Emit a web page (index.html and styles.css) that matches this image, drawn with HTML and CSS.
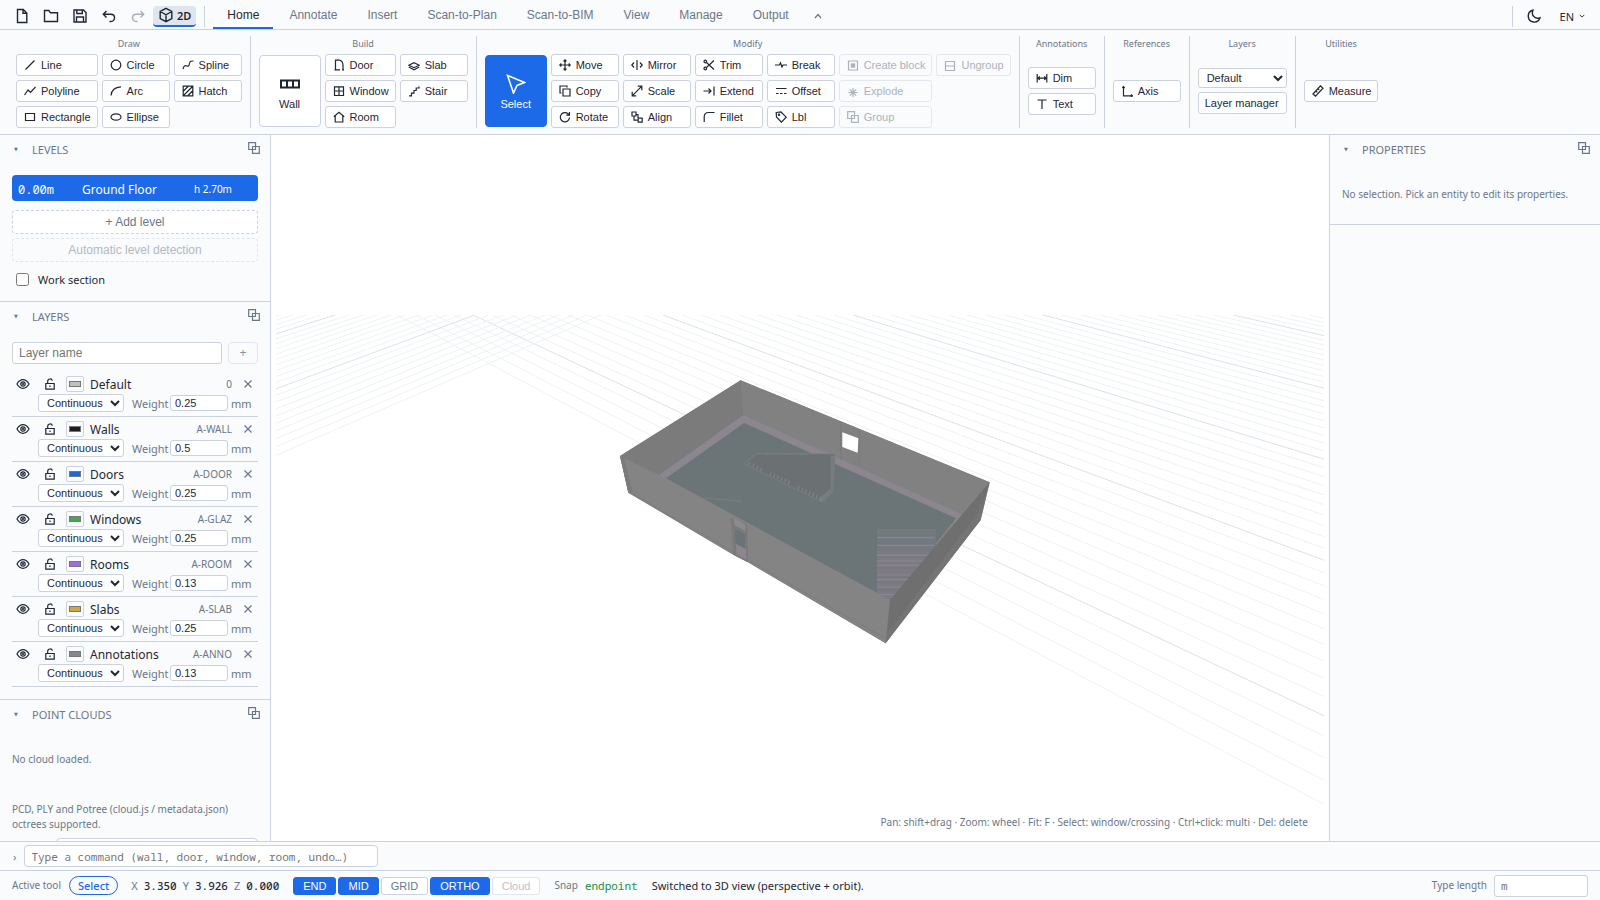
FILE: index.html
```html
<!DOCTYPE html>
<html lang="en">
<head>
<meta charset="utf-8">
<title>Plan editor</title>
<link rel="stylesheet" href="styles.css">
</head>
<body>
<svg class="defs" aria-hidden="true">
  <symbol id="i-line" viewBox="0 0 12 12"><path d="M1.5 10.5 10.5 1.500"/></symbol>
  <symbol id="i-poly" viewBox="0 0 12 12"><path d="M.5 10 4 5l2.500 2.500L11.500 2"/></symbol>
  <symbol id="i-rect" viewBox="0 0 12 12"><path d="M1.500 2.500h9v7h-9z"/></symbol>
  <symbol id="i-circle" viewBox="0 0 12 12"><circle cx="6" cy="6" r="4.800"/></symbol>
  <symbol id="i-arc" viewBox="0 0 12 12"><path d="M1 10.500C1.500 5 5.500 2 11 1.800"/></symbol>
  <symbol id="i-ellipse" viewBox="0 0 12 12"><ellipse cx="6" cy="6" rx="5" ry="3.200"/></symbol>
  <symbol id="i-spline" viewBox="0 0 12 12"><path d="M1 10c1-4 2.500-3.500 4-3s2 0 2.500-2.500S9 2 11.500 2"/></symbol>
  <symbol id="i-hatch" viewBox="0 0 12 12"><path d="M1.200 1.200h9.600v9.600H1.200zM1.500 6l4.500-4.500M1.500 10.500l9-9M6 10.500 10.500 6"/></symbol>
  <symbol id="i-wall" viewBox="0 0 20 10"><path d="M1 1.500h18v7H1zM7 1.500v7M13 1.500v7"/></symbol>
  <symbol id="i-door" viewBox="0 0 12 12"><path d="M2.500 10.800V1.200h4.500c2 .8 3 2.500 3 5v4.600M1.500 10.800h5.500M9 10.800h2"/></symbol>
  <symbol id="i-window" viewBox="0 0 12 12"><path d="M1.500 1.800h9v8.700h-9zM6 1.800v8.700M1.500 6h9"/></symbol>
  <symbol id="i-room" viewBox="0 0 12 12"><path d="M.8 5.800 6 1.200l5.200 4.600M2.200 5v6h7.600V5"/></symbol>
  <symbol id="i-slab" viewBox="0 0 12 12"><path d="M.8 6.200 6 3.700l5.200 2.500L6 8.700zM.8 8 6 10.700 11.200 8"/></symbol>
  <symbol id="i-stair" viewBox="0 0 12 12"><path d="M1 10.800h2.500V8.200H6V5.500h2.200V3h2.800V1.500"/></symbol>
  <symbol id="i-select" viewBox="0 0 20 20"><path d="m1.500 1.500 17 7-7.500 3-3.500 7.500z"/></symbol>
  <symbol id="i-move" viewBox="0 0 12 12"><path d="M6 .8v10.400M.8 6h10.400M4.500 2.300 6 .8l1.500 1.500M4.500 9.700 6 11.200l1.500-1.500M2.300 4.500.8 6l1.500 1.500M9.700 4.500 11.200 6 9.700 7.500"/></symbol>
  <symbol id="i-copy" viewBox="0 0 12 12"><path d="M4 4h7v7H4zM2.500 8H1V1h7v1.500"/></symbol>
  <symbol id="i-rotate" viewBox="0 0 12 12"><path d="M10.500 6.500A4.600 4.600 0 1 1 9 2.800l1.300 1.200M10.500 1v3.200H7.300"/></symbol>
  <symbol id="i-mirror" viewBox="0 0 12 12"><path d="M6 1v10M3 3.500.8 6 3 8.500M9 3.500 11.200 6 9 8.500"/></symbol>
  <symbol id="i-scale" viewBox="0 0 12 12"><path d="m1.200 10.800 9.600-9.600M6.800 1.200h4v4M1.200 6.800v4h4"/></symbol>
  <symbol id="i-align" viewBox="0 0 12 12"><path d="M1 1h4v4H1zM7.200 7.200h4v4h-4zM3 5v4.200h4.200M5 3.500h2v3.700"/></symbol>
  <symbol id="i-trim" viewBox="0 0 12 12"><path d="m3.500 3.500 7.500 7M3.500 8.500l7.500-7"/><circle cx="2.300" cy="2.500" r="1.300"/><circle cx="2.300" cy="9.500" r="1.300"/></symbol>
  <symbol id="i-extend" viewBox="0 0 12 12"><path d="M.5 6h7.500M5.500 3.500 8 6 5.500 8.500M11 1.500v9"/></symbol>
  <symbol id="i-fillet" viewBox="0 0 12 12"><path d="M1.200 11V6c0-3 1.500-4.500 4.500-4.500H11.500"/></symbol>
  <symbol id="i-break" viewBox="0 0 12 12"><path d="M0 6h4.500L5.500 3.800 7 8l1-2h4"/></symbol>
  <symbol id="i-offset" viewBox="0 0 12 12"><path d="M1 3.500h10.500M1 8.500h2.500M5 8.500h2.500M9 8.500h2.500"/></symbol>
  <symbol id="i-label" viewBox="0 0 12 12"><path d="M1.200 1.500 6 1l5.200 5.200-4.800 5L1.500 6z"/><circle cx="4" cy="3.800" r=".6"/></symbol>
  <symbol id="i-block" viewBox="0 0 12 12"><path d="M1.500 2h9v9h-9z"/><path class="solid" d="M3.800 4.300h4.400v4.400H3.800z"/></symbol>
  <symbol id="i-explode" viewBox="0 0 12 12"><path d="M6 3v9M1.500 7.500h9M2.800 4.300l6.400 6.400M9.200 4.300l-6.400 6.400"/></symbol>
  <symbol id="i-group" viewBox="0 0 12 12"><path d="M.7 .7h6.800v6.800H.7zM4.500 4.500h6.800v6.800H4.500z"/></symbol>
  <symbol id="i-ungroup" viewBox="0 0 12 12"><path d="M1.500 2v10M10.500 2v10M1.500 2.500h9M1.500 7h9M1.500 11.500h9"/></symbol>
  <symbol id="i-dim" viewBox="0 0 12 12"><path d="M1.200 2v8.500M10.800 2v8.500M1.200 6.200h9.600M3.800 4.500 1.800 6.200l2 1.700M8.200 4.500l2 1.700-2 1.700"/></symbol>
  <symbol id="i-text" viewBox="0 0 12 12"><path d="M1.500 2h9M6 2v9"/></symbol>
  <symbol id="i-axis" viewBox="0 0 12 12"><path d="M2.500 1.500v9.300h9M1.300 3l1.200-1.500L3.700 3M10 9.500l1.500 1.300L10 12"/></symbol>
  <symbol id="i-measure" viewBox="0 0 12 12"><path d="M1 9 8.500.8 11 3.200 3.500 11.200zM4 6l1.300 1.300M6 3.800l1.300 1.300"/></symbol>
  <symbol id="i-eye" viewBox="0 0 14 12"><path d="M1 6c3.200-5.800 8.800-5.800 12 0-3.200 5.800-8.800 5.800-12 0z"/><circle cx="7" cy="6" r="2.200"/><circle cx="7" cy="6" r=".5"/></symbol>
  <symbol id="i-lock" viewBox="0 0 12 12"><path d="M1.800 5.500h8.400v5.700H1.800zM3.700 5.500V3.200C3.700.3 8 .3 8.300 2.800M6 7.500v1.500"/></symbol>
  <symbol id="i-x" viewBox="0 0 12 12"><path d="m2.500 2.500 7 7M9.500 2.500l-7 7"/></symbol>
</svg>

<header class="topbar">
  <button class="tool" aria-label="New"><svg viewBox="0 0 16 16"><path d="M3.500 1.500h5.800l3.500 3.500v9.500H3.500zM9 1.500V5.300h3.800"/></svg></button>
  <button class="tool" aria-label="Open"><svg viewBox="0 0 16 16"><path d="M1.500 13.500v-11h4.300l1.700 2.200h7v8.800z"/></svg></button>
  <button class="tool" aria-label="Save"><svg viewBox="0 0 16 16"><path d="M2 2h9.500L14 4.500V14H2zM4.500 14V9h7v5M4.800 2v3.500h5.500V2"/></svg></button>
  <button class="tool" aria-label="Undo"><svg viewBox="0 0 16 16"><path d="M5.500 3 2.300 6.200l3.200 3.200M2.300 6.200h7.500c5 0 5 7.300 0 7.300H8.500"/></svg></button>
  <button class="tool" aria-label="Redo" disabled><svg viewBox="0 0 16 16"><path d="m10.500 3 3.200 3.200-3.200 3.200M13.700 6.200H6.200c-5 0-5 7.300 0 7.300h1.300"/></svg></button>
  <button class="view-toggle"><svg viewBox="0 0 16 16"><path d="m8 1.300 5.800 3.200v7L8 14.700l-5.800-3.200v-7zM2.200 4.500 8 7.800l5.800-3.300M8 7.800v6.900"/></svg>2D</button>
  <span class="rule"></span>
  <nav class="tabs">
    <button class="tab active">Home</button><button class="tab">Annotate</button><button class="tab">Insert</button><button class="tab">Scan-to-Plan</button><button class="tab">Scan-to-BIM</button><button class="tab">View</button><button class="tab">Manage</button><button class="tab">Output</button>
    <button class="tab fold" aria-label="Collapse ribbon"><svg class="chev" viewBox="0 0 8 8"><path d="m1 6 3-3.500L7 6"/></svg></button>
  </nav>
  <div class="top-right">
    <span class="rule"></span>
    <button class="tool" aria-label="Dark theme"><svg viewBox="0 0 16 16"><path d="M7 2.200A6 6 0 1 0 14 9.800 5.500 5.500 0 0 1 7 2.200z"/></svg></button>
    <button class="lang">EN <svg class="chev small" viewBox="0 0 8 8"><path d="m1 2.500 3 3 3-3"/></svg></button>
  </div>
</header>

<section class="ribbon">
  <div class="group"><div class="group-name">Draw</div><div class="cols">
    <div class="col"><button class="btn"><svg><use href="#i-line"/></svg>Line</button><button class="btn"><svg><use href="#i-poly"/></svg>Polyline</button><button class="btn"><svg><use href="#i-rect"/></svg>Rectangle</button></div>
    <div class="col"><button class="btn"><svg><use href="#i-circle"/></svg>Circle</button><button class="btn"><svg><use href="#i-arc"/></svg>Arc</button><button class="btn"><svg><use href="#i-ellipse"/></svg>Ellipse</button></div>
    <div class="col"><button class="btn"><svg><use href="#i-spline"/></svg>Spline</button><button class="btn"><svg><use href="#i-hatch"/></svg>Hatch</button></div>
  </div></div>
  <div class="group"><div class="group-name">Build</div><div class="cols">
    <button class="big"><svg class="wall"><use href="#i-wall"/></svg>Wall</button>
    <div class="col"><button class="btn"><svg><use href="#i-door"/></svg>Door</button><button class="btn"><svg><use href="#i-window"/></svg>Window</button><button class="btn"><svg><use href="#i-room"/></svg>Room</button></div>
    <div class="col"><button class="btn"><svg><use href="#i-slab"/></svg>Slab</button><button class="btn"><svg><use href="#i-stair"/></svg>Stair</button></div>
  </div></div>
  <div class="group"><div class="group-name">Modify</div><div class="cols">
    <button class="big on"><svg><use href="#i-select"/></svg>Select</button>
    <div class="col"><button class="btn"><svg><use href="#i-move"/></svg>Move</button><button class="btn"><svg><use href="#i-copy"/></svg>Copy</button><button class="btn"><svg><use href="#i-rotate"/></svg>Rotate</button></div>
    <div class="col"><button class="btn"><svg><use href="#i-mirror"/></svg>Mirror</button><button class="btn"><svg><use href="#i-scale"/></svg>Scale</button><button class="btn"><svg><use href="#i-align"/></svg>Align</button></div>
    <div class="col"><button class="btn"><svg><use href="#i-trim"/></svg>Trim</button><button class="btn"><svg><use href="#i-extend"/></svg>Extend</button><button class="btn"><svg><use href="#i-fillet"/></svg>Fillet</button></div>
    <div class="col"><button class="btn"><svg><use href="#i-break"/></svg>Break</button><button class="btn"><svg><use href="#i-offset"/></svg>Offset</button><button class="btn"><svg><use href="#i-label"/></svg>Lbl</button></div>
    <div class="col"><button class="btn" disabled><svg><use href="#i-block"/></svg>Create block</button><button class="btn" disabled><svg><use href="#i-explode"/></svg>Explode</button><button class="btn" disabled><svg><use href="#i-group"/></svg>Group</button></div>
    <div class="col"><button class="btn" disabled><svg><use href="#i-ungroup"/></svg>Ungroup</button></div>
  </div></div>
  <div class="group"><div class="group-name">Annotations</div><div class="cols middle"><div class="col"><button class="btn"><svg><use href="#i-dim"/></svg>Dim</button><button class="btn"><svg><use href="#i-text"/></svg>Text</button></div></div></div>
  <div class="group"><div class="group-name">References</div><div class="cols middle"><div class="col"><button class="btn"><svg><use href="#i-axis"/></svg>Axis</button></div></div></div>
  <div class="group"><div class="group-name">Layers</div><div class="cols middle"><div class="col"><select class="layer-select" aria-label="Current layer"><option>Default</option></select><button class="btn plain">Layer manager</button></div></div></div>
  <div class="group"><div class="group-name">Utilities</div><div class="cols middle"><div class="col"><button class="btn"><svg><use href="#i-measure"/></svg>Measure</button></div></div></div>
</section>

<main class="work">
  <aside class="side left">
    <section class="panel">
      <h2><span class="tri">▼</span>Levels<button class="pop" aria-label="Detach levels"><svg><use href="#i-group"/></svg></button></h2>
      <div class="level"><code>0.00m</code><span>Ground Floor</span><small>h 2.70m</small></div>
      <button class="dashed">+ Add level</button>
      <button class="dashed" disabled>Automatic level detection</button>
      <label class="check"><input type="checkbox">Work section</label>
    </section>
    <section class="panel">
      <h2><span class="tri">▼</span>Layers<button class="pop" aria-label="Detach layers"><svg><use href="#i-group"/></svg></button></h2>
      <div class="add-layer"><input type="text" placeholder="Layer name" aria-label="Layer name"><button disabled>+</button></div>
      <ul class="layers" id="layers"></ul>
    </section>
    <section class="panel clouds">
      <h2><span class="tri">▼</span>Point clouds<button class="pop" aria-label="Detach point clouds"><svg><use href="#i-group"/></svg></button></h2>
      <p>No cloud loaded.</p>
      <p class="formats">PCD, PLY and Potree (cloud.js / metadata.json) octrees supported.</p>
      <input class="url" type="text" aria-label="Cloud address">
    </section>
  </aside>

  <div class="viewport">
    <svg class="scene" viewBox="271 135 1058 706" preserveAspectRatio="xMidYMid slice" role="img" aria-label="3D view of the building">
      <clipPath id="ground"><rect x="276" y="315" width="1048" height="526"/></clipPath>
      <g id="grid" clip-path="url(#ground)"></g>
      <g transform="translate(600 360) scale(.33333)">
        <path fill="#848485" d="M60 288 422 61l747 306-27 113-285 370-414-244-43-22L85 398z"/>
        <path fill="#7b7b7c" d="m60 288 362-227 8 104-252 180z"/>
        <path fill="#818182" d="m422 61 747 306-90 106-649-308z"/>
        <path fill="#8c868f" d="m178 345 252-180 655 298-20 25-640-290-227 163z"/>
        <path fill="#6b7577" d="m198 355 234-166 636 286-198 245z"/>
        <path fill="#7d7a83" d="M831 507h177v52L870 720l-39-21z"/>
        <path fill="#747a80" d="M831 507h177v52l-10 12H831z"/>
        <g stroke="#8d8896" stroke-width="3"><path d="M831 533h172M831 556h172M831 586h152M831 603h138M831 616h127M831 645h103M831 658h92M831 681h72M840 704h43"/></g>
        <g stroke="#717782" stroke-width="2"><path d="M831 514h177M831 526h177M831 541h177M831 549h177M831 572h165M831 591h148M831 625h120M831 652h97M831 668h84M831 690h65"/></g>
        <path fill="#848485" d="m60 288 118 60 692 372-13 130-414-244-43-22L85 398z"/>
        <path fill="#747475" d="M1169 367 870 720l-13 130 285-370z"/>
        <path fill="#6f6f70" d="M870 720 862 822 1142 445 1169 367z"/>
        <path fill="#7b7b7c" d="m60 288 12 4 24 100-11 6z"/>
        <path fill="none" stroke="#79797a" stroke-width="2" d="m85 394 315 182M443 600l415 236 4-20M1150 380l-12 75 4 22M862 822l280-360"/>
        <path fill="#6b7073" d="m433 312 37-31h235l-5 112-32 34z"/>
        <path fill="#777d7f" d="m692 288 15-3-7 110-32 32-13-10 37-32z"/>
        <path fill="none" stroke="#7d8588" stroke-width="2" d="m433 312 37-31h235M433 312l235 115M310 414l115 10"/>
        <path fill="none" stroke="#7e8587" stroke-width="4" stroke-dasharray="3 6" d="M500 283h125M635 281h68"/>
        <path fill="none" stroke="#828a8b" stroke-width="3" d="m446 316 3-10m9 16 3-10m9 16 3-10m9 16 3-10M510 348l3-11m8 16 3-11m8 16 3-11m8 16 3-11m8 16 3-11m8 16 3-11M594 390l3-12m8 16 3-12m8 18 3-12m8 18 3-12m8 16 3-12m8 18 3-12m8 18 3-12"/>
        <path fill="#7b7b7c" d="m392 472 50 22v112l-42-22z"/>
        <path fill="#8b8b8c" d="m400 494 38 20v-20l-38-20z"/>
        <path fill="#6a7377" d="m405 508 31 14-2 44-27-14z"/>
        <path fill="#8d8691" d="m408 552 29 15 3 32-30-16z"/>
        <path stroke="#757576" stroke-width="2" fill="none" d="M401 474v26l7 84M437 494l6 110M722 188v112M778 210v108"/>
        <path fill="#fff" d="m727 217 48 18-2 43-46-17z"/>
      </g>
    </svg>
    <p class="hint">Pan: shift+drag · Zoom: wheel · Fit: F · Select: window/crossing · Ctrl+click: multi · Del: delete</p>
  </div>

  <aside class="side right">
    <section class="panel">
      <h2><span class="tri">▼</span>Properties<button class="pop" aria-label="Detach properties"><svg><use href="#i-group"/></svg></button></h2>
      <p>No selection. Pick an entity to edit its properties.</p>
    </section>
  </aside>
</main>

<form class="command"><label for="cmd">›</label><input id="cmd" type="text" placeholder="Type a command (wall, door, window, room, undo…)"></form>

<footer class="status">
  <span class="muted">Active tool</span><span class="pill">Select</span>
  <span class="coords"><span>X</span><b>3.350</b><span>Y</span><b>3.926</b><span>Z</span><b>0.000</b></span>
  <span class="snaps"><button class="snap on">END</button><button class="snap on">MID</button><button class="snap">GRID</button><button class="snap on">ORTHO</button><button class="snap" disabled>Cloud</button></span>
  <span class="snapinfo">Snap<code>endpoint</code></span>
  <span class="message">Switched to 3D view (perspective + orbit).</span>
  <label class="length" for="len">Type length</label><input id="len" type="text" placeholder="m">
</footer>
<script src="app.js"></script>
</body>
</html>
```

FILE: styles.css
```css
:root {
  --bg: #f9fbfd;
  --line: #cbd2dd;
  --text: #1f2733;
  --muted: #6b7788;
  --blue: #1d6ae8;
  --ui: "Noto Sans", sans-serif;
  --control: "Liberation Sans", Arial, sans-serif;
  --mono: "Noto Sans Mono", "Liberation Mono", monospace;
}
* { box-sizing: border-box; }
body {
  margin: 0;
  height: 100vh;
  display: flex;
  flex-direction: column;
  overflow: hidden;
  background: var(--bg);
  color: var(--text);
  font: 11px/15px var(--ui);
}
button, input, select { font: 11px var(--control); color: inherit; margin: 0; }
input::placeholder { color: #757575; }
button { padding: 0; border: 0; background: none; }
svg { fill: none; stroke: currentColor; stroke-width: 1.2; flex: none; }
.solid { fill: currentColor; stroke: none; }
.defs { position: absolute; width: 0; height: 0; }
p, h2, ul { margin: 0; padding: 0; }
.muted { font-size: 10px; color: var(--muted); }

.topbar {
  display: flex;
  align-items: center;
  height: 30px;
  flex: none;
  padding: 0 10px 0 7px;
  border-bottom: 1px solid var(--line);
}
.tool { width: 29px; height: 26px; margin-top: 3px; display: grid; place-items: center; }
.tool svg, .view-toggle svg { width: 16px; height: 16px; stroke-width: 1.4; }
.tool:disabled { color: #a9afb9; }
.view-toggle {
  display: flex;
  align-items: center;
  gap: 3px;
  height: 21px;
  margin: 3px 8px 0 1px;
  padding: 0 5px;
  border-radius: 4px;
  border-bottom: 2px solid var(--blue);
  background: #dfe5ef;
  font: 600 11px var(--ui);
}
.rule { width: 1px; height: 21px; margin-top: 3px; background: var(--line); }
.tabs { display: flex; align-self: stretch; gap: 2px; margin-left: 8px; }
.tab { padding: 2px 14px 0; border-bottom: 2px solid transparent; font-size: 12px; color: var(--muted); }
.tab.active { border-color: var(--blue); color: var(--text); }
.tab.fold { padding: 4px 9px 0; }
.chev { width: 8px; height: 8px; }
.chev.small { width: 6px; height: 6px; }
.top-right { display: flex; align-items: center; margin-left: auto; }
.top-right .tool { margin: 3px 5px 0 7px; }
.lang { display: flex; align-items: center; gap: 5px; padding: 3px 5px 0 6px; font-family: var(--ui); }

.ribbon { display: flex; flex: none; padding: 6px 8px; border-bottom: 1px solid var(--line); }
.group { display: flex; flex-direction: column; gap: 4px; padding: 0 8px; border-right: 1px solid var(--line); }
.group:last-child { border: 0; }
.group-name { height: 14px; font-size: 9px; text-align: center; color: var(--muted); }
.cols { display: flex; gap: 4px; height: 74px; }
.cols.middle { align-items: center; }
.col { display: flex; flex-direction: column; gap: 4px; }
.btn {
  display: flex;
  align-items: center;
  gap: 5px;
  height: 22px;
  min-width: 68px;
  padding: 0 6px 0 7px;
  border: 1px solid var(--line);
  border-radius: 3px;
  background: #fff;
}
.btn svg { width: 12px; height: 12px; }
.btn:disabled { color: #adb3bc; border-color: #e4e8ee; background: var(--bg); }
.btn.plain { padding: 0 7px 0 6px; }
.big {
  display: flex;
  flex-direction: column;
  align-items: center;
  justify-content: center;
  gap: 4px;
  width: 62px;
  height: 72px;
  margin-top: 1px;
  padding-top: 2px;
  border: 1px solid var(--line);
  border-radius: 4px;
  background: #fff;
}
.big svg { width: 20px; height: 20px; stroke-width: 1.6; }
.big .wall { stroke-width: 2; }
.big.on { border-color: var(--blue); background: var(--blue); color: #fff; }
.layer-select { height: 20px; padding: 0 4px; border: 1px solid var(--line); border-radius: 3px; background: #fff; }

.work { display: flex; flex: 1; min-height: 0; }
.side { width: 271px; flex: none; overflow: hidden; }
.left { border-right: 1px solid var(--line); }
.right { border-left: 1px solid var(--line); }
.panel { padding: 0 12px 12px; border-bottom: 1px solid var(--line); }
.panel h2 {
  display: flex;
  align-items: center;
  height: 40px;
  padding-bottom: 12px;
  font-size: 11px;
  font-weight: 400;
  color: var(--muted);
  text-transform: uppercase;
}
.tri { width: 20px; font: 5px "DejaVu Sans", sans-serif; padding-left: 2px; }
.pop { margin: 0 -2px 2px auto; display: flex; }
.pop svg { width: 12px; height: 12px; }
.level {
  display: grid;
  grid-template-columns: 64px 1fr 58px;
  align-items: center;
  height: 26px;
  margin-bottom: 9px;
  padding: 2px 6px 0;
  border-radius: 4px;
  background: var(--blue);
  color: #fff;
  font-size: 12px;
}
.level code { font: 12px var(--mono); }
.level small { font-size: 10px; }
.dashed {
  display: block;
  width: 100%;
  height: 24px;
  margin-bottom: 4px;
  border: 1px dashed var(--line);
  border-radius: 4px;
  background: #fff;
  font-size: 12px;
  color: var(--muted);
}
.dashed:disabled { background: none; border-color: #e1e6ec; color: #b3b9c2; }
.check { display: flex; align-items: center; gap: 9px; height: 26px; margin-bottom: -3px; padding: 1px 4px 0; }
.check input { width: 13px; height: 13px; }
.add-layer { display: flex; gap: 6px; }
.add-layer input { flex: 1; min-width: 0; height: 22px; padding: 0 6px; border: 1px solid var(--line); border-radius: 3px; background: #fff; font-size: 12px; }
.add-layer button { width: 30px; border: 1px solid #e1e6ec; border-radius: 4px; color: #8c939e; font-size: 12px; }
.layers { margin-top: 8px; list-style: none; }
.layers li { padding: 4px 0; border-bottom: 1px solid var(--line); }
.layer-top { display: grid; grid-template-columns: 21px 21px 18px 1fr auto 20px; gap: 6px; align-items: center; height: 16px; margin-bottom: 2px; }
.layer-top button { display: grid; place-items: center; }
.layer-top svg { width: 12px; height: 12px; }
.layer-top .eye { width: 14px; }
.layer-top input { width: 18px; height: 16px; padding: 0; border: 1px solid var(--line); border-radius: 2px; background: var(--bg); }
.layer-top input::-webkit-color-swatch-wrapper { padding: 4px 2px; }
.layer-top input::-webkit-color-swatch { border: 1px solid #777; border-radius: 0; }
.layer-name { font-size: 12px; }
.code { font-size: 10px; color: var(--muted); }
.del { color: var(--muted); }
.layer-bottom { display: flex; align-items: center; height: 18px; margin-left: 26px; color: var(--muted); }
.layer-bottom select { width: 86px; height: 18px; margin-right: 8px; padding: 0 4px; border: 1px solid var(--line); border-radius: 3px; background: #fff; color: var(--text); }
.layer-bottom label { width: 38px; }
.layer-bottom input { width: 58px; height: 16px; margin-right: 3px; padding: 0 4px; border: 1px solid var(--line); border-radius: 3px; background: #fff; color: var(--text); }
.panel p { padding: 12px 0 10px; font-size: 10px; color: var(--muted); }
.clouds .formats { padding: 25px 0 6px; }
.url { display: block; width: 202px; height: 22px; margin-left: auto; border: 1px solid var(--line); border-radius: 4px; }

.viewport { position: relative; flex: 1; min-width: 0; background: #fff; }
.scene { position: absolute; inset: 0; width: 100%; height: 100%; stroke: none; }
.minor { stroke: #edf3f5; stroke-width: 1; }
.major { stroke: #dbe2e9; stroke-width: 1; }
.hint { position: absolute; right: 21px; bottom: 11px; font-size: 10px; color: var(--muted); }

.command { display: flex; align-items: center; gap: 8px; height: 29px; flex: none; padding: 0 12px 0 13px; border-top: 1px solid var(--line); color: var(--muted); }
.command input { width: 354px; height: 22px; padding: 0 6px; border: 1px solid var(--line); border-radius: 4px; background: #fff; font-family: var(--mono); }
.status { display: flex; align-items: center; height: 30px; flex: none; padding: 0 12px; border-top: 1px solid var(--line); }
.pill { margin: 0 13px 0 8px; padding: 1px 8px; border: 1px solid var(--blue); border-radius: 10px; color: var(--blue); font-weight: 500; }
.coords { display: flex; gap: 6px; color: var(--muted); }
.coords b, .snapinfo code { font-family: var(--mono); }
.coords b { font-weight: 500; color: var(--text); }
.snaps { display: flex; gap: 2px; margin: 0 14px; }
.snap { height: 18px; padding: 0 9px; border: 1px solid var(--line); border-radius: 3px; background: #fff; color: var(--muted); }
.snap.on { border-color: var(--blue); background: var(--blue); color: #fff; }
.snap:disabled { border-color: #e1e6ec; color: #bcc2ca; }
.snapinfo { display: flex; gap: 7px; margin-right: 14px; font-size: 10px; color: var(--muted); }
.snapinfo code { color: #16914a; font-size: 11px; }
.length { margin: 0 7px 0 auto; font-size: 10px; color: var(--muted); }
#len { width: 94px; height: 22px; padding: 0 6px; border: 1px solid var(--line); border-radius: 3px; background: #fff; font-family: var(--mono); }
```

FILE: app.js
```js
const layers = [
  ["Default", "0", "#c0c0c0", "0.25"],
  ["Walls", "A-WALL", "#1c1c1c", "0.5"],
  ["Doors", "A-DOOR", "#1d6ae0", "0.25"],
  ["Windows", "A-GLAZ", "#3fa850", "0.25"],
  ["Rooms", "A-ROOM", "#9c6ee6", "0.13"],
  ["Slabs", "A-SLAB", "#d0a640", "0.25"],
  ["Annotations", "A-ANNO", "#888888", "0.13"],
];
document.getElementById("layers").innerHTML = layers.map(([name, code, color, weight], i) => `
  <li>
    <div class="layer-top">
      <button aria-label="Toggle ${name}"><svg class="eye"><use href="#i-eye"/></svg></button>
      <button aria-label="Lock ${name}"><svg><use href="#i-lock"/></svg></button>
      <input type="color" value="${color}" aria-label="${name} color">
      <span class="layer-name">${name}</span><span class="code">${code}</span>
      <button class="del" aria-label="Delete ${name}"><svg><use href="#i-x"/></svg></button>
    </div>
    <div class="layer-bottom">
      <select aria-label="${name} line type"><option>Continuous</option></select>
      <label for="w${i}">Weight</label><input id="w${i}" type="text" value="${weight}">mm
    </div>
  </li>`).join("");

// Ground grid: two families of lines, each converging on its own vanishing point.
const horizon = -17, near = 315, depth = near - horizon;
const parts = [];
function ray(x, vanish, major) {
  const t = 900 / depth;
  const x2 = vanish + (x - vanish) * t;
  parts.push(`<line class="${major ? "major" : "minor"}" x1="${x}" y1="${near}" x2="${x2}" y2="${horizon + 900}"/>`);
}
for (let k = -4; k <= 44; k++) ray(473 + k * 19, -232, k % 10 === 0);
for (let k = -14; k <= 9; k++) ray(475 + k * 14, 1370, k % 10 === 0);
document.getElementById("grid").innerHTML = parts.join("");
```
